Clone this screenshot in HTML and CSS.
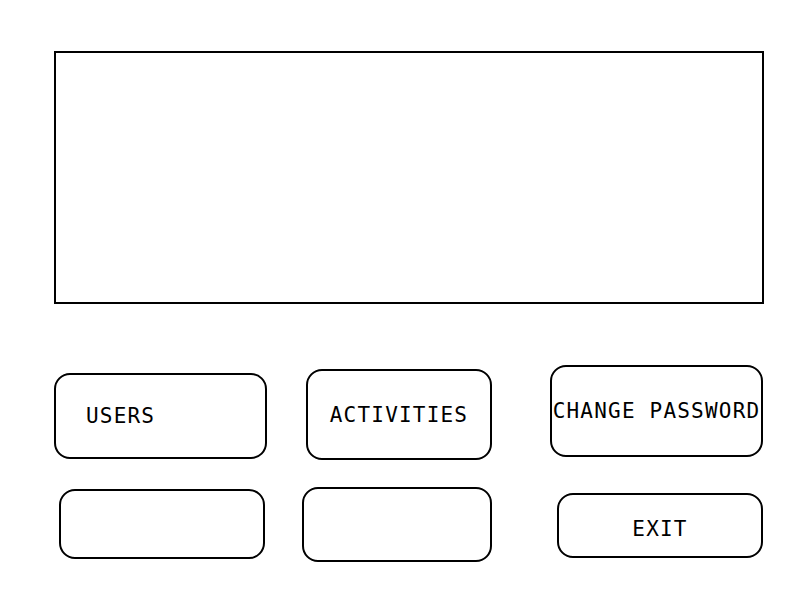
FILE: index.html
```html
<!DOCTYPE html>
<html>
<head>
<meta charset="utf-8">
<link rel="stylesheet" href="styles.css">
</head>
<body>
<div class="page">
  <div class="display"></div>
  <div class="row row-top">
    <div class="btn b1 left">USERS</div>
    <div class="btn b2">ACTIVITIES</div>
    <div class="btn b3">CHANGE PASSWORD</div>
  </div>
  <div class="row row-bottom">
    <div class="btn b4"></div>
    <div class="btn b5"></div>
    <div class="btn b6">EXIT</div>
  </div>
</div>
</body>
</html>
```
FILE: styles.css
```css
html, body {
  margin: 0;
  background: #ffffff;
}
.page {
  width: 800px;
  height: 600px;
  padding: 51px 0 0 54px;
  box-sizing: border-box;
  font-family: "DejaVu Sans Mono", monospace;
  font-size: 21px;
  letter-spacing: 1.2px;
  color: #000;
}
.display {
  width: 710px;
  height: 253px;
  border: 2px solid #000;
  box-sizing: border-box;
}
.row {
  display: flex;
  align-items: flex-start;
}
.row-top {
  margin-top: 61px;
}
.row-bottom {
  margin-top: 27px;
}
.btn {
  box-sizing: border-box;
  border: 2px solid #000;
  border-radius: 16px;
  display: flex;
  align-items: center;
  justify-content: center;
  white-space: nowrap;
}
.btn.left {
  justify-content: flex-start;
  padding-left: 30px;
}
.b1 { width: 213px; height: 86px; margin-top: 8px; }
.b2 { width: 186px; height: 91px; margin-top: 4px; margin-left: 39px; }
.b3 { width: 213px; height: 92px; margin-left: 58px; }
.b4 { width: 206px; height: 70px; margin-top: 2px; margin-left: 5px; }
.b5 { width: 190px; height: 75px; margin-left: 37px; }
.b6 { width: 206px; height: 65px; margin-top: 6px; margin-left: 65px; padding-top: 6px; }
```
